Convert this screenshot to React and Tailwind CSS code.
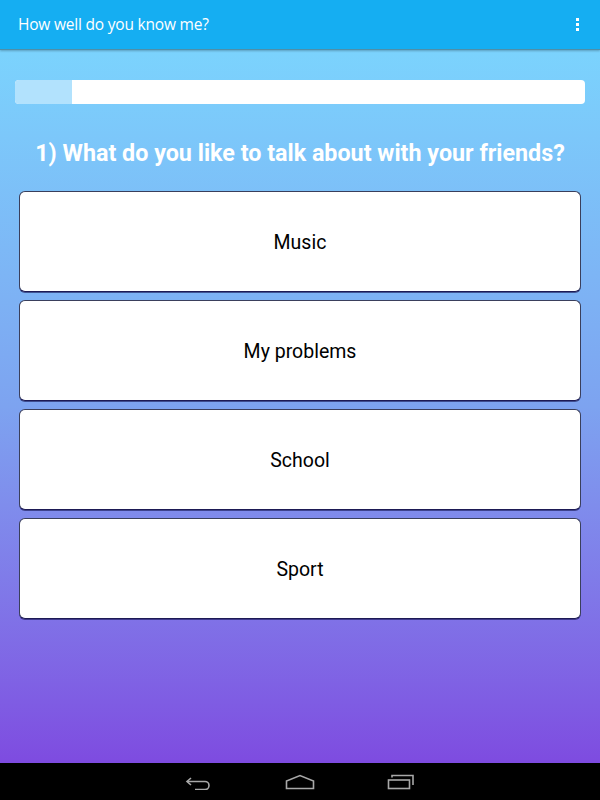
const answers = ['Music', 'My problems', 'School', 'Sport']

function NavBar() {
  return (
    <div className="h-[37px] bg-black flex items-center justify-center gap-[72px] shrink-0">
      {/* back */}
      <svg width="28" height="16" viewBox="0 0 28 16" fill="none" stroke="#a8a8a8" strokeWidth="1.6">
        <path d="M6 4 L2 7.5 L6 11" />
        <path d="M2 7.5 H20 a4 4 0 0 1 0 8 H10" />
      </svg>
      {/* home */}
      <svg width="30" height="16" viewBox="0 0 30 16" fill="none" stroke="#a8a8a8" strokeWidth="1.6">
        <path d="M1.5 14.5 V7 L15 1.5 L28.5 7 V14.5 Z" />
      </svg>
      {/* recents */}
      <svg width="28" height="16" viewBox="0 0 28 16" fill="none" stroke="#a8a8a8" strokeWidth="1.6">
        <rect x="1.5" y="6" width="21" height="8.5" />
        <path d="M5 3.5 V1.5 H26 V11" />
      </svg>
    </div>
  )
}

export default function App() {
  return (
    <div className="w-[600px] h-[800px] flex flex-col font-['Roboto',sans-serif] overflow-hidden">
      {/* App bar */}
      <div className="h-[50px] bg-[#15aef2] flex items-center justify-between pl-[18px] pr-[21px] shrink-0 border-b border-[#4f8fa8] relative z-10 shadow-[0_1px_2px_rgba(0,0,0,0.25)]">
        <span className="text-white text-[15.5px] font-['Open_Sans',sans-serif] tracking-[-0.2px]">How well do you know me?</span>
        <div className="flex flex-col gap-[2px]">
          <span className="w-[3px] h-[3px] bg-white" />
          <span className="w-[3px] h-[3px] bg-white" />
          <span className="w-[3px] h-[3px] bg-white" />
        </div>
      </div>

      {/* Content */}
      <div className="flex-1 bg-gradient-to-b from-[#7bd3fd] via-[#7da3f0] to-[#7e4be0] px-[15px] pt-[30px]">
        <div className="h-[24px] bg-white rounded-[4px] overflow-hidden">
          <div className="h-full bg-[#b2e2fd]" style={{ width: '10%' }} />
        </div>

        <h1 className="text-white font-bold text-[23.3px] text-center mt-[34px] leading-[30px]">
          1) What do you like to talk about with your friends?
        </h1>

        <div className="flex flex-col gap-[8px] mt-[23px] px-[4px]">
          {answers.map(a => (
            <button
              key={a}
              className="h-[101px] bg-white rounded-[6px] border border-[#3a3f5c] border-b-[#1d1a55] shadow-[0_1px_0_rgba(20,20,80,0.6)] text-black text-[19.5px] flex items-center justify-center pt-[2px]"
            >
              {a}
            </button>
          ))}
        </div>
      </div>

      <NavBar />
    </div>
  )
}
